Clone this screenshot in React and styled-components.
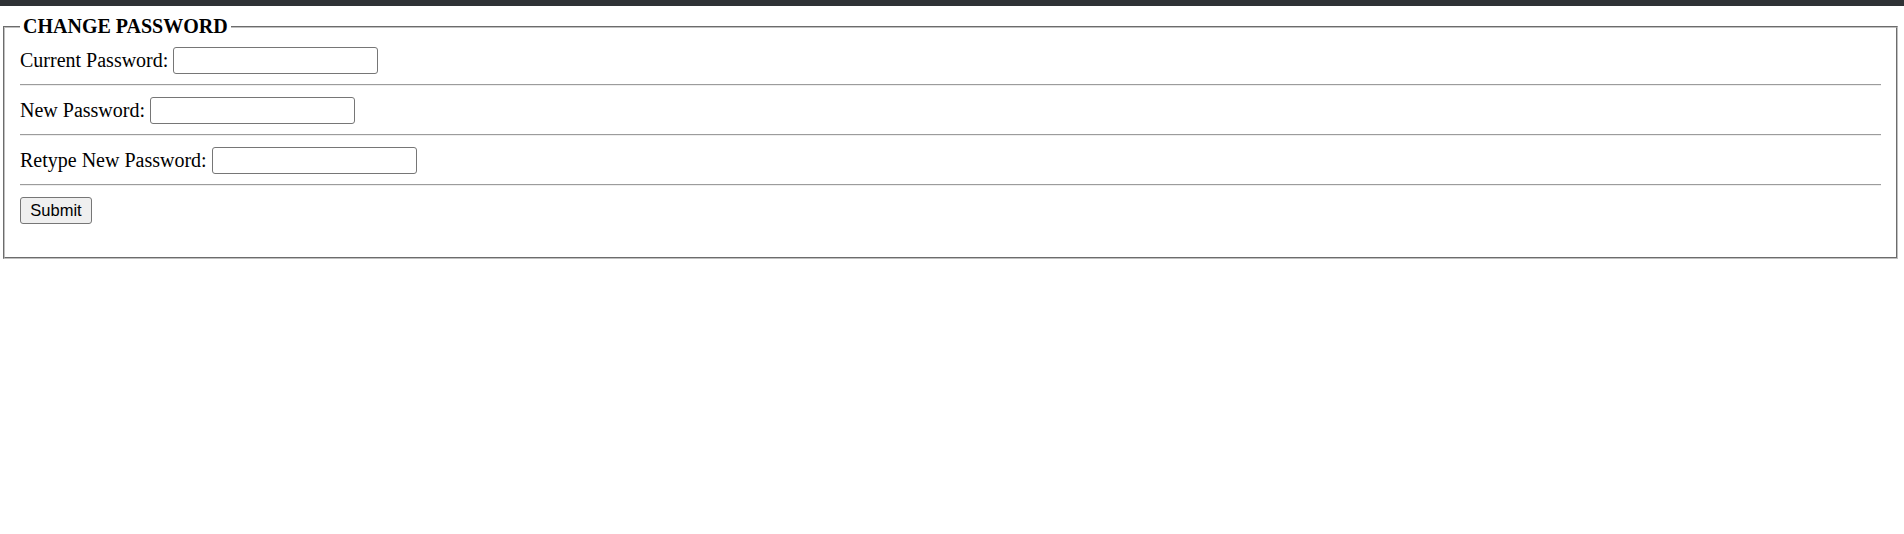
import React from "react";
import styled, { createGlobalStyle } from "styled-components";

const Global = createGlobalStyle`
  html, body { margin: 0; padding: 0; background: #fff; }
  body { font-family: "Liberation Serif", "Times New Roman", serif; color: #000; }
`;

const TopBar = styled.div`
  height: 6px;
  background: #2f3235;
`;

const Page = styled.div`
  padding-top: 9px;
`;

const Fieldset = styled.fieldset`
  margin: 0 6px 0 3px;
  padding: 8px 15px 33px 15px;
  border: 2px groove #c0c0c0;
  min-width: 0;
`;

const Legend = styled.legend`
  padding: 0 3px;
  font-family: "Liberation Serif", "Times New Roman", serif;
  font-weight: bold;
  font-size: 20px;
  line-height: 23px;
`;

const Row = styled.div`
  display: flex;
  align-items: center;
  gap: 5px;
  height: 28px;
  font-size: 20px;
`;

const Label = styled.label`
  white-space: nowrap;
`;

const Input = styled.input`
  box-sizing: border-box;
  width: 205px;
  height: 27px;
  border: 1px solid #767676;
  border-radius: 3px;
  padding: 1px 3px;
  font-size: 16px;
  background: #fff;
`;

const Divider = styled.hr`
  margin: 10px 0;
  border: 0;
  border-top: 1px solid #9c9c9c;
  border-bottom: 1px solid #eeeeee;
  height: 0;
`;

const Button = styled.button`
  box-sizing: border-box;
  width: 72px;
  height: 27px;
  font-family: "Liberation Sans", Arial, sans-serif;
  font-size: 16.5px;
  color: #000;
  background: #efefef;
  border: 1px solid #767676;
  border-radius: 3px;
  padding: 0;
`;

const fields = [
  { id: "cur", label: "Current Password:" },
  { id: "new", label: "New Password:" },
  { id: "re", label: "Retype New Password:" },
];

export default function App() {
  return (
    <>
      <Global />
      <TopBar />
      <Page>
        <form onSubmit={(e) => e.preventDefault()}>
          <Fieldset>
            <Legend>CHANGE PASSWORD</Legend>
            {fields.map((f) => (
              <React.Fragment key={f.id}>
                <Row>
                  <Label htmlFor={f.id}>{f.label}</Label>
                  <Input id={f.id} type="password" />
                </Row>
                <Divider />
              </React.Fragment>
            ))}
            <Row>
              <Button type="submit">Submit</Button>
            </Row>
          </Fieldset>
        </form>
      </Page>
    </>
  );
}
